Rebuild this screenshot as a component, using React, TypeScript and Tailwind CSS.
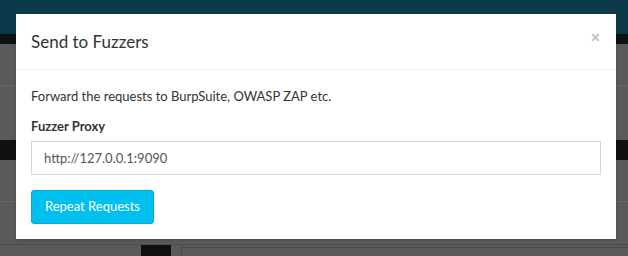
import { X } from 'lucide-react';

const font = { fontFamily: 'Lato, "Noto Sans", sans-serif' };

function Backdrop() {
  return (
    <div className="flex flex-col h-full">
      <div className="h-[34px] bg-[#0d3a4b]" />
      <div className="h-[10px] bg-[#0e1011]" />
      <div className="h-[42px] bg-[#5a5a5a] border-b border-[#686868]" />
      <div className="h-[54px] bg-[#5a5a5a]" />
      <div className="h-[20px] bg-[#0e1011]" />
      <div className="h-[42px] bg-[#5a5a5a] border-b border-[#686868]" />
      <div className="h-[43px] bg-[#5a5a5a] border-b border-[#4c4c4c]" />
      <div className="flex-1 flex bg-[#5a5a5a]">
        <div className="w-[141px]" />
        <div className="w-[30px] bg-[#0e1011]" />
        <div className="w-[10px]" />
        <div className="flex-1 mt-[2px] border-l border-t border-[#4a4a4a]" />
      </div>
    </div>
  );
}

export default function App() {
  return (
    <div className="relative w-[628px] h-[256px] overflow-hidden bg-[#5a5a5a]" style={font}>
      <Backdrop />

      {/* Modal */}
      <div className="absolute left-[16px] top-[14px] w-[600px] h-[225px] bg-white shadow-[0_2px_3px_rgba(0,0,0,0.125)]">
        <div className="flex items-center justify-between px-[15px] h-[56px] border-b border-[#f0f0f0]">
          <h4 className="text-[17px] leading-[25px] text-[#333]">Send to Fuzzers</h4>
          <button className="text-[#c4c4c4] mr-[0px] -mt-[8px]">
            <X className="w-[11px] h-[11px]" strokeWidth={4.5} />
          </button>
        </div>
        <div className="px-[15px] pt-[16px]">
          <p className="text-[13px] leading-[20px] text-[#333] mb-[10px]">
            Forward the requests to BurpSuite, OWASP ZAP etc.
          </p>
          <label className="block text-[13px] leading-[20px] font-bold text-[#333] mb-[5px]">Fuzzer Proxy</label>
          <input
            className="block w-full h-[34px] border border-[#d2d6de] px-[12px] text-[13px] text-[#555] outline-none"
            defaultValue="http://127.0.0.1:9090"
          />
          <button className="mt-[15px] h-[34px] px-[13px] rounded-[3px] bg-[#00c0ef] border border-[#00acd6] text-white text-[13px]">
            Repeat Requests
          </button>
        </div>
      </div>
    </div>
  );
}
